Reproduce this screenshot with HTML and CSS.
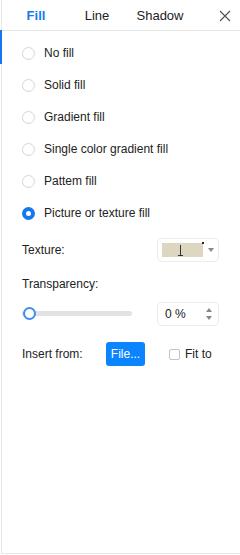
FILE: index.html
```html
<!DOCTYPE html>
<html lang="en">
<head>
    <meta charset="UTF-8">
    <meta name="viewport" content="width=device-width, initial-scale=1.0">
    <title>Format Shape</title>
    <link rel="stylesheet" href="styles.css">
</head>
<body>
    <div class="panel">
        <div class="tabs">
            <div class="tab active">Fill</div>
            <div class="tab">Line</div>
            <div class="tab">Shadow</div>
            <div class="close">
                <svg width="12" height="12" viewBox="0 0 12 12">
                    <path d="M1 1 L11 11 M11 1 L1 11" stroke="#555" stroke-width="1.2" fill="none"/>
                </svg>
            </div>
        </div>

        <div class="content">
            <div class="indicator"></div>
            <div class="options">
                <label class="option"><span class="radio"></span>No fill</label>
                <label class="option"><span class="radio"></span>Solid fill</label>
                <label class="option"><span class="radio"></span>Gradient fill</label>
                <label class="option"><span class="radio"></span>Single color gradient fill</label>
                <label class="option"><span class="radio"></span>Pattem fill</label>
                <label class="option"><span class="radio checked"></span>Picture or texture fill</label>
            </div>

            <div class="field-row texture-row">
                <span class="field-label">Texture:</span>
                <div class="select">
                    <div class="swatch"><span class="mark"></span><span class="dot"></span></div>
                    <span class="caret"></span>
                </div>
            </div>

            <div class="plain-label">Transparency:</div>

            <div class="field-row slider-row">
                <div class="slider">
                    <div class="track"></div>
                    <div class="thumb"></div>
                </div>
                <div class="number">
                    <span>0 %</span>
                    <div class="spinner">
                        <span class="up"></span>
                        <span class="down"></span>
                    </div>
                </div>
            </div>

            <div class="field-row insert-row">
                <span class="insert-label">Insert from:</span>
                <button class="file-btn">File...</button>
                <label class="check"><span class="box"></span>Fit to</label>
            </div>
        </div>
    </div>
</body>
</html>
```

FILE: styles.css
```css
body {
    margin: 0;
    font-family: 'Liberation Sans', Arial, sans-serif;
    font-size: 12px;
    color: #222;
    background: #fff;
}

.panel {
    width: 239px;
    height: 554px;
    margin-left: 1px;
    border-left: 1px solid #e8e8e8;
    border-bottom: 1px solid #e8e8e8;
    box-sizing: border-box;
    position: relative;
}

.tabs {
    display: grid;
    grid-template-columns: 68px 54px 72px 1fr;
    height: 30px;
    border-bottom: 1px solid #e8e8e8;
    font-size: 13px;
    align-items: center;
}

.tab {
    text-align: center;
    color: #222;
}

.tab.active {
    color: #1677f0;
    font-weight: bold;
}

.close {
    display: flex;
    justify-content: flex-end;
    padding-right: 9px;
    padding-top: 1px;
}

.content {
    position: relative;
    padding: 6px 0 0 20px;
}

.indicator {
    position: absolute;
    left: -2px;
    top: -1px;
    width: 2px;
    height: 34px;
    background: #1677f0;
}

.option {
    display: flex;
    align-items: center;
    height: 32px;
    gap: 9px;
}

.radio {
    width: 13px;
    height: 13px;
    border: 1px solid #d6d6d6;
    border-radius: 50%;
    box-sizing: border-box;
}

.radio.checked {
    border: 4px solid #1677f0;
}

.field-row {
    display: flex;
    align-items: center;
    height: 24px;
}

.texture-row {
    margin-top: 9px;
}

.field-label {
    width: 135px;
}

.select {
    width: 62px;
    height: 24px;
    border: 1px solid #ececec;
    border-radius: 5px;
    box-sizing: border-box;
    display: flex;
    align-items: center;
    padding-left: 4px;
}

.swatch {
    position: relative;
    width: 41px;
    height: 14px;
    background: #ddd6c1;
}

.swatch .mark {
    position: absolute;
    left: 18px;
    top: 2px;
    width: 1px;
    height: 11px;
    background: #333;
}

.swatch .mark::after {
    content: "";
    position: absolute;
    left: -2px;
    bottom: 0;
    width: 5px;
    height: 1px;
    background: #333;
}

.swatch .dot {
    position: absolute;
    right: -1px;
    top: -1px;
    width: 2px;
    height: 2px;
    background: #222;
}

.caret {
    margin-left: 5px;
    border-left: 3px solid transparent;
    border-right: 3px solid transparent;
    border-top: 4px solid #888;
}

.plain-label {
    margin-top: 14px;
    height: 16px;
    line-height: 16px;
}

.slider-row {
    margin-top: 10px;
}

.slider {
    position: relative;
    width: 110px;
    height: 24px;
    margin-right: 25px;
}

.track {
    position: absolute;
    left: 0;
    right: 0;
    top: 9px;
    height: 5px;
    border-radius: 3px;
    background: #e2e2e2;
}

.thumb {
    position: absolute;
    left: 1px;
    top: 5px;
    width: 13px;
    height: 13px;
    border: 2px solid #3c8ef0;
    border-radius: 50%;
    background: #fff;
    box-sizing: border-box;
}

.number {
    width: 62px;
    height: 24px;
    border: 1px solid #ececec;
    border-radius: 5px;
    box-sizing: border-box;
    display: flex;
    align-items: center;
    justify-content: space-between;
    padding: 0 6px 0 7px;
}

.spinner {
    display: flex;
    flex-direction: column;
    gap: 4px;
}

.spinner .up {
    border-left: 3px solid transparent;
    border-right: 3px solid transparent;
    border-bottom: 4px solid #888;
}

.spinner .down {
    border-left: 3px solid transparent;
    border-right: 3px solid transparent;
    border-top: 4px solid #888;
}

.insert-row {
    margin-top: 16px;
}

.insert-label {
    width: 84px;
}

.file-btn {
    width: 39px;
    height: 24px;
    border: none;
    border-radius: 3px;
    background: #0a84ff;
    color: #fff;
    font-family: inherit;
    font-size: 12px;
    padding: 0;
}

.check {
    display: flex;
    align-items: center;
    gap: 5px;
    margin-left: 24px;
}

.box {
    width: 11px;
    height: 11px;
    border: 1px solid #c4c4c4;
    border-radius: 2px;
    box-sizing: border-box;
}
```
